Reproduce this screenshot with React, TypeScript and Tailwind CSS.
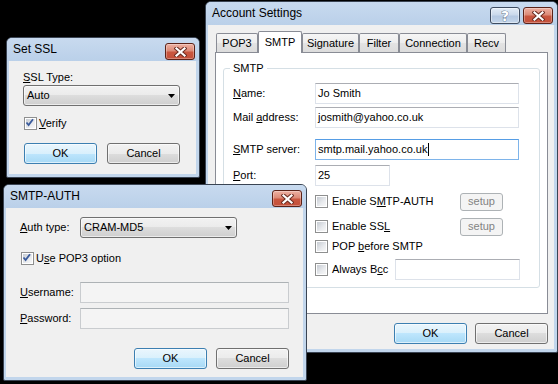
import React from "react";

const BTN_BG = "bg-[linear-gradient(#f2f2f2,#ebebeb_50%,#dddddd_50%,#cfcfcf)]";

function CloseBtn() {
  return (
    <div className="flex h-[17px] w-[30px] items-center justify-center rounded-[3px] border border-[#5b2218] bg-[linear-gradient(#eeb1a3,#dc8a77_45%,#c9563f_55%,#c4503a)] shadow-[inset_0_0_0_1px_rgba(255,255,255,0.3)]">
      <svg width="13" height="10" viewBox="0 0 13 10">
        <path d="M2.5 1.5 L10.5 8.5 M10.5 1.5 L2.5 8.5" stroke="#6a2c22" strokeWidth="4.2" strokeLinecap="square" />
        <path d="M2.5 1.5 L10.5 8.5 M10.5 1.5 L2.5 8.5" stroke="#ffffff" strokeWidth="2.2" strokeLinecap="square" />
      </svg>
    </div>
  );
}

function HelpBtn() {
  return (
    <div className="flex h-[17px] w-[30px] items-center justify-center rounded-[3px] border border-[#3e4c60] bg-[linear-gradient(#e4edf7,#cbdaec_45%,#b5c9e2_55%,#c3d5ea)] shadow-[inset_0_0_0_1px_rgba(255,255,255,0.45)]">
      <span className="font-['DejaVu_Sans',sans-serif] text-[14px] leading-none font-bold text-white [-webkit-text-stroke:0.6px_#34465e] [paint-order:stroke]">
        ?
      </span>
    </div>
  );
}

function Win({
  title,
  className,
  help,
  children,
}: {
  title: string;
  className: string;
  help?: boolean;
  children: React.ReactNode;
}) {
  return (
    <div
      className={`absolute flex flex-col rounded-t-[6px] rounded-b-[2px] border border-[#3a4453] bg-[#c2d6ec] ${className}`}
    >
      <div className="flex h-[23px] shrink-0 items-start justify-between rounded-t-[5px] bg-[linear-gradient(#c8daef,#bad0e9)] pl-[6px] pr-[4px]">
        <span className="mt-[4px] text-[12px] leading-[15px] text-black">{title}</span>
        <div className="mt-[5px] flex gap-[3px]">
          {help && <HelpBtn />}
          <CloseBtn />
        </div>
      </div>
      <div className="mb-[3px] ml-[2px] mr-[3px] flex flex-1 flex-col bg-[#f0f0f0]">{children}</div>
    </div>
  );
}

function Button({ label, def, className }: { label: string; def?: boolean; className: string }) {
  return (
    <div
      className={`flex h-[21px] items-center justify-center rounded-[3px] border text-[11px] leading-none ${
        def
          ? "border-[#3c7fb1] bg-[linear-gradient(#eaf6fd,#d9f0fc_50%,#bee6fd_50%,#a7d9f5)] shadow-[inset_0_0_0_1px_rgba(255,255,255,0.6)]"
          : `border-[#707070] ${BTN_BG} shadow-[inset_0_0_0_1px_rgba(255,255,255,0.6)]`
      } ${className}`}
    >
      {label}
    </div>
  );
}

function SetupBtn() {
  return (
    <div className="flex h-[18px] w-[43px] items-center justify-center rounded-[3px] border border-[#adb2b5] bg-[#f4f4f4] text-[11px] leading-none text-[#838383]">
      setup
    </div>
  );
}

function Select({ value, className }: { value: string; className: string }) {
  return (
    <div
      className={`flex h-[21px] items-center justify-between rounded-[3px] border border-[#707070] ${BTN_BG} pl-[3px] pr-[4px] shadow-[inset_0_0_0_1px_rgba(255,255,255,0.6)] ${className}`}
    >
      <span className="text-[11px] leading-none">{value}</span>
      <svg width="7" height="4" viewBox="0 0 7 4">
        <path d="M0 0 H7 L3.5 4 Z" fill="#000" />
      </svg>
    </div>
  );
}

function Input({
  value,
  className,
  focused,
  disabled,
}: {
  value?: string;
  className: string;
  focused?: boolean;
  disabled?: boolean;
}) {
  const b = focused
    ? "border-[#7eb4ea] border-t-[#569de5]"
    : disabled
    ? "border-[#c9cccf] border-t-[#adb2b5] bg-[#f4f4f4]"
    : "border-[#dde2ea] border-t-[#abadb3] bg-white";
  return (
    <div className={`flex h-[21px] items-center border pl-[2px] ${b} ${focused ? "bg-white" : ""} ${className}`}>
      <span className="text-[11px] leading-none">{value}</span>
      {focused && <span className="ml-[1px] h-[13px] w-[1px] bg-black" />}
    </div>
  );
}

function Check({ checked }: { checked?: boolean }) {
  return (
    <div className="flex h-[13px] w-[13px] shrink-0 border border-[#8e8f8f] bg-white p-[1px]">
      <div className="relative flex flex-1 items-center justify-center bg-[linear-gradient(135deg,#c6cbd2,#e9ebee_60%,#f7f7f7)]">
        {checked && (
          <svg width="9" height="9" viewBox="0 0 9 9" className="absolute -left-[1px] -top-[1px]">
            <path d="M1.5 4.5 L3.6 7 L8 1.2" stroke="#3a5b9c" strokeWidth="1.8" fill="none" />
          </svg>
        )}
      </div>
    </div>
  );
}

const tabs: [string, string][] = [
  ["POP3", "w-[42px]"],
  ["SMTP", "w-[44px]"],
  ["Signature", "w-[57px]"],
  ["Filter", "w-[40px]"],
  ["Connection", "w-[68px]"],
  ["Recv", "w-[39px]"],
];

function AccountSettings() {
  return (
    <Win title="Account Settings" help className="left-[205px] top-[1px] h-[352px] w-[353px]">
      <div className="ml-[8px] mt-[6px] flex h-[21px] items-end">
        {tabs.map(([t, w]) =>
          t === "SMTP" ? (
            <div
              key={t}
              className={`relative z-10 -mb-px flex h-[22px] items-center justify-center rounded-t-[2px] border border-b-0 border-[#898c95] bg-white pb-[1px] text-[11px] ${w}`}
            >
              {t}
            </div>
          ) : (
            <div
              key={t}
              className={`flex h-[19px] items-center justify-center rounded-t-[2px] border border-b-0 border-[#898c95] bg-[linear-gradient(#f6f6f6,#ededed_50%,#e3e3e3_50%,#dcdcdc)] text-[11px] ${w}`}
            >
              {t}
            </div>
          )
        )}
      </div>
      <div className="ml-[7px] flex h-[262px] w-[333px] flex-col border border-[#898c95] bg-white">
        <fieldset className="mx-[7px] mt-[9px] h-[226px] rounded-[3px] border border-[#d5dfe5] pb-[7px]">
          <legend className="ml-[6px] px-[3px] text-[11px] leading-[13px]">SMTP</legend>
          <div className="mt-[8px] flex h-[21px] items-center pl-[9px]">
            <span className="w-[82px]">
              <u>N</u>ame:
            </span>
            <Input value="Jo Smith" className="w-[204px]" />
          </div>
          <div className="mt-[3px] flex h-[21px] items-center pl-[9px]">
            <span className="w-[82px]">
              Mail <u>a</u>ddress:
            </span>
            <Input value="josmith@yahoo.co.uk" className="w-[204px]" />
          </div>
          <div className="mt-[11px] flex h-[21px] items-center pl-[9px]">
            <span className="w-[82px]">
              <u>S</u>MTP server:
            </span>
            <Input value="smtp.mail.yahoo.co.uk" focused className="w-[204px]" />
          </div>
          <div className="mt-[5px] flex h-[21px] items-center pl-[9px]">
            <span className="w-[82px]">
              <u>P</u>ort:
            </span>
            <Input value="25" className="w-[75px]" />
          </div>
          <div className="mt-[6px] flex h-[19px] items-center pl-[91px]">
            <Check />
            <span className="ml-[4px] w-[128px]">
              Enable S<u>M</u>TP-AUTH
            </span>
            <SetupBtn />
          </div>
          <div className="mt-[6px] flex h-[19px] items-center pl-[91px]">
            <Check />
            <span className="ml-[4px] w-[128px]">
              Enable SS<u>L</u>
            </span>
            <SetupBtn />
          </div>
          <div className="mt-[1px] flex h-[19px] items-center pl-[91px]">
            <Check />
            <span className="ml-[4px]">
              POP <u>b</u>efore SMTP
            </span>
          </div>
          <div className="mt-[3px] flex h-[21px] items-center pl-[91px]">
            <Check />
            <span className="ml-[4px] w-[63px]">
              Always B<u>c</u>c
            </span>
            <Input className="w-[125px]" />
          </div>
        </fieldset>
      </div>
      <div className="mt-[9px] flex justify-end gap-[8px] pr-[6px]">
        <Button label="OK" def className="w-[73px]" />
        <Button label="Cancel" className="w-[73px]" />
      </div>
    </Win>
  );
}

function SetSSL() {
  return (
    <Win title="Set SSL" className="left-[6px] top-[37px] h-[141px] w-[194px]">
      <div className="flex flex-col pl-[14px] pt-[9px]">
        <div className="flex h-[14px] items-center">
          <span>
            <u>S</u>SL Type:
          </span>
        </div>
        <Select value="Auto" className="mt-[1px] w-[157px]" />
        <div className="mt-[8px] flex h-[19px] items-center pl-[1px]">
          <Check checked />
          <span className="ml-[2px]">
            <u>V</u>erify
          </span>
        </div>
        <div className="ml-[1px] mt-[10px] flex gap-[10px]">
          <Button label="OK" def className="w-[73px]" />
          <Button label="Cancel" className="w-[73px]" />
        </div>
      </div>
    </Win>
  );
}

function SmtpAuth() {
  return (
    <Win title="SMTP-AUTH" className="left-[3px] top-[184px] h-[197px] w-[304px]">
      <div className="flex flex-col pl-[14px] pt-[9px]">
        <div className="flex h-[21px] items-center">
          <span className="w-[60px]">
            <u>A</u>uth type:
          </span>
          <Select value="CRAM-MD5" className="w-[157px]" />
        </div>
        <div className="mt-[11px] flex h-[19px] items-center pl-[1px]">
          <Check checked />
          <span className="ml-[2px]">
            U<u>s</u>e POP3 option
          </span>
        </div>
        <div className="mt-[14px] flex h-[21px] items-center">
          <span className="w-[60px]">
            <u>U</u>sername:
          </span>
          <Input disabled className="w-[209px]" />
        </div>
        <div className="mt-[5px] flex h-[21px] items-center">
          <span className="w-[60px]">
            <u>P</u>assword:
          </span>
          <Input disabled className="w-[209px]" />
        </div>
        <div className="mt-[19px] flex justify-end gap-[9px] pr-[14px]">
          <Button label="OK" def className="w-[73px]" />
          <Button label="Cancel" className="w-[73px]" />
        </div>
      </div>
    </Win>
  );
}

export default function App() {
  return (
    <div className="relative h-[384px] w-[558px] overflow-hidden bg-black font-['Liberation_Sans',Arial,sans-serif] text-[11px] leading-[13px] text-black">
      <AccountSettings />
      <SetSSL />
      <SmtpAuth />
    </div>
  );
}
